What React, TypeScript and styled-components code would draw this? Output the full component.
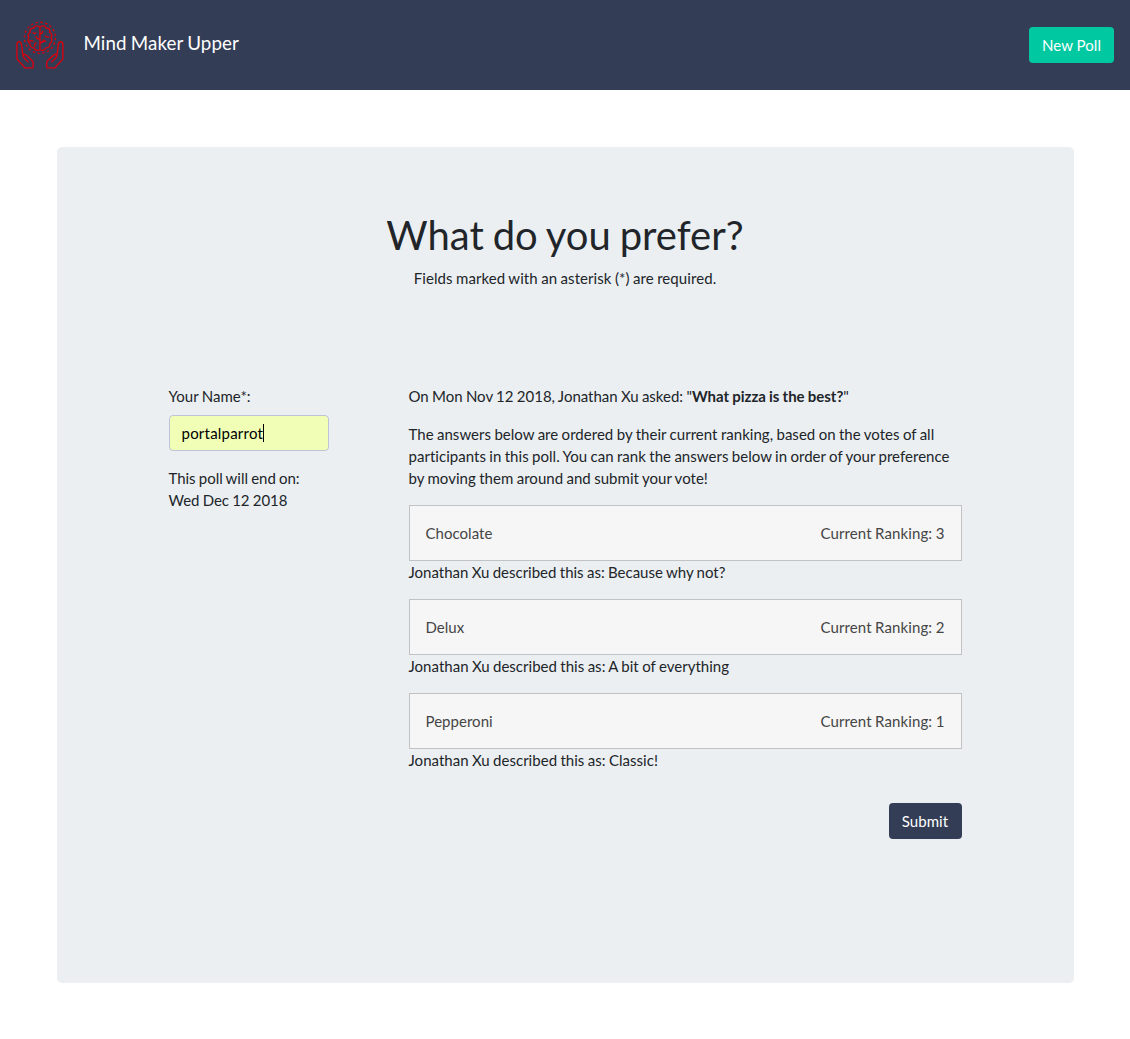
import React from "react";
import styled, { createGlobalStyle } from "styled-components";

const Global = createGlobalStyle`
  *, *::before, *::after { box-sizing: border-box; }
  body {
    margin: 0;
    background: #fff;
    color: #212529;
    font: 400 15px/22px Lato, sans-serif;
    font-variant-ligatures: none;
    word-spacing: -0.5px;
    letter-spacing: 0.03px;
  }
  p, h1 { margin: 0; }
`;

const Nav = styled.nav`
  display: flex;
  align-items: center;
  justify-content: space-between;
  height: 90px;
  padding: 0 16px 0 10px;
  background: #333d56;
`;

const Brand = styled.a`
  display: flex;
  align-items: center;
  gap: 13.5px;
  color: #fff;
  font-size: 18.75px;
  line-height: 28px;
  letter-spacing: 0.06px;
`;

const BrandName = styled.span`
  padding-bottom: 5px;
`;

const Button = styled.button<{ $color: string; $width: number }>`
  width: ${(p) => p.$width}px;
  height: 36px;
  padding: 0;
  border: 0;
  border-radius: 4px;
  background: ${(p) => p.$color};
  color: #fff;
  font: inherit;
  letter-spacing: 0.06px;
`;

const Panel = styled.main`
  width: 1017px;
  height: 836px;
  margin: 57px 56.5px 0;
  padding: 64px 112px;
  border-radius: 5px;
  background: #ebeff2;
`;

const Header = styled.header`
  text-align: center;
`;

const Title = styled.h1`
  margin-bottom: 8px;
  font-size: 40px;
  font-weight: 400;
  line-height: 48px;
  letter-spacing: 0;
  word-spacing: -1.33px;
`;

const Text = styled.p<{ $track?: number; $gap?: number }>`
  margin-bottom: ${(p) => p.$gap ?? 0}px;
  letter-spacing: ${(p) => p.$track ?? 0.03}px;
`;

const Form = styled.form`
  display: grid;
  grid-template-columns: 160px 553px;
  column-gap: 80px;
  margin-top: 96px;
`;

const NameLabel = styled.label`
  display: block;
  margin-bottom: 8px;
`;

const NameField = styled.div`
  display: flex;
  align-items: center;
  height: 36px;
  margin-bottom: 16px;
  padding: 0 12px;
  border: 1px solid #bcc4d6;
  border-radius: 4px;
  background: #f1ffb6;
  color: #000;
  letter-spacing: 0.22px;
`;

const Caret = styled.span`
  width: 1px;
  height: 18px;
  background: #000;
`;

const Answer = styled.div`
  display: flex;
  justify-content: space-between;
  padding: 16px;
  border: 1px solid #c0c2c4;
  background: #f6f6f6;
  color: #454545;
`;

const Ranking = styled.span`
  letter-spacing: 0.11px;
`;

const Actions = styled.div`
  display: flex;
  justify-content: flex-end;
  margin-top: 32px;
`;

const answers = [
  { name: "Chocolate", rank: 3, note: "Because why not?", track: 0 },
  { name: "Delux", rank: 2, note: "A bit of everything", track: 0.025 },
  { name: "Pepperoni", rank: 1, note: "Classic!", track: 0.03 },
];

const hand =
  "M70 163V147Q70 144 68 142L50 125Q45 119 41 122Q37 125 40 130L56 146M38 122L34 90Q32 82 26 82Q20 83 20 91V132Q20 136 23 139L40 157L44 163H70";

const Logo = () => (
  <svg width="60" height="62" viewBox="0 0 180 186" fill="none" stroke="#dc000d" strokeWidth="4.2" strokeLinejoin="round">
    <g transform="translate(1.5 3.5) scale(0.97)">
      <path d={hand} />
      <g transform="translate(182 0) scale(-1 1)">
        <path d={hand} />
      </g>
      <circle cx="91" cy="70" r="48" strokeDasharray="7.2 7.88" />
      <path d="M91 35V109M91 37C86 31 74 32 72 40C63 39 58 46 61 53C53 56 53 65 57 69C52 76 54 84 60 87C59 96 64 101 72 101C75 109 85 111 91 107M91 37C96 31 108 32 110 40C119 39 124 46 121 53C129 56 129 65 125 69C130 76 128 84 122 87C123 96 118 101 110 101C107 109 97 111 91 107" />
      <path d="M69 53Q74 60 80 54M79 65Q80 74 91 74M59 82Q63 77 71 80M75 98Q72 88 81 85M91 58Q100 57 100 48M107 63Q110 70 120 67M91 86Q102 85 104 75M100 80Q106 82 110 79" />
    </g>
  </svg>
);

export default function App() {
  return (
    <>
      <Global />
      <Nav>
        <Brand>
          <Logo />
          <BrandName>Mind Maker Upper</BrandName>
        </Brand>
        <Button $color="#00c9a2" $width={85}>New Poll</Button>
      </Nav>
      <Panel>
        <Header>
          <Title>What do you prefer?</Title>
          <Text $track={0.075}>Fields marked with an asterisk (*) are required.</Text>
        </Header>
        <Form>
          <div>
            <NameLabel>Your Name*:</NameLabel>
            <NameField>
              portalparrot
              <Caret />
            </NameField>
            <Text $track={-0.045}>
              This poll will end on:
              <br />
              Wed Dec 12 2018
            </Text>
          </div>
          <div>
            <Text $track={-0.01} $gap={16}>
              On Mon Nov 12 2018, Jonathan Xu asked: "<b>What pizza is the best?</b>"
            </Text>
            <Text $gap={16}>
              The answers below are ordered by their current ranking, based on the votes of all participants in this
              poll. You can rank the answers below in order of your preference by moving them around and submit your
              vote!
            </Text>
            {answers.map((a) => (
              <React.Fragment key={a.name}>
                <Answer>
                  <span>{a.name}</span>
                  <Ranking>Current Ranking: {a.rank}</Ranking>
                </Answer>
                <Text $track={a.track} $gap={16}>Jonathan Xu described this as: {a.note}</Text>
              </React.Fragment>
            ))}
            <Actions>
              <Button type="button" $color="#333d56" $width={73}>Submit</Button>
            </Actions>
          </div>
        </Form>
      </Panel>
    </>
  );
}
